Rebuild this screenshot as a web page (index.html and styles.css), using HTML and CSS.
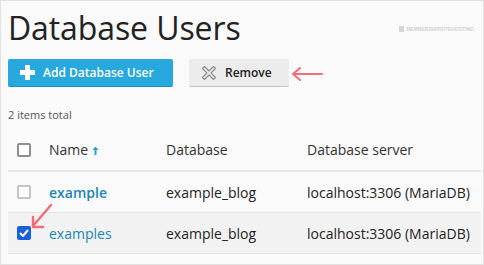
FILE: index.html
```html
<!DOCTYPE html>
<html lang="en">
<head>
  <meta charset="UTF-8" />
  <title>Database Users</title>
  <link rel="stylesheet" href="styles.css">
</head>
<body>
  <div class="frame">
    <div class="title-row">
      <h1>Database Users</h1>
      <span class="mark"><span class="mark-icon"></span>MEMBERSHIPSITEHOSTING</span>
    </div>

    <div class="toolbar">
      <button class="btn btn-primary">
        <svg width="15" height="15" viewBox="0 0 15 15"><path d="M5 0h5v5h5v5h-5v5h-5v-5h-5v-5h5z" fill="#fff"/></svg>
        Add Database User
      </button>
      <button class="btn btn-default">
        <svg width="16" height="16" viewBox="0 0 16 16"><path d="M1.5 3.5l2-2 4.5 4.5 4.5-4.5 2 2-4.5 4.5 4.5 4.5-2 2-4.5-4.5-4.5 4.5-2-2 4.5-4.5z" fill="none" stroke="#8c8c8c" stroke-width="1.1" stroke-linejoin="round"/></svg>
        Remove
      </button>
    </div>

    <div class="total">2 items total</div>

    <div class="table">
      <div class="row head">
        <div class="cell"><span class="check"></span></div>
        <div class="cell">Name <svg class="sort" width="7" height="9" viewBox="0 0 7 9"><path d="M3.5 0.5L0.5 4h2v5h2V4h2z" fill="#2a9fd0"/></svg></div>
        <div class="cell">Database</div>
        <div class="cell">Database server</div>
      </div>
      <div class="row">
        <div class="cell"><span class="check light"></span></div>
        <div class="cell"><a class="name bold">example</a></div>
        <div class="cell">example_blog</div>
        <div class="cell">localhost:3306 (MariaDB)</div>
      </div>
      <div class="row selected">
        <div class="cell"><span class="check on"><svg width="10" height="8" viewBox="0 0 10 8"><path d="M1 4l3 3 5-6" fill="none" stroke="#fff" stroke-width="2"/></svg></span></div>
        <div class="cell"><a class="name">examples</a></div>
        <div class="cell">example_blog</div>
        <div class="cell">localhost:3306 (MariaDB)</div>
      </div>
    </div>

    <svg class="arrow arrow-remove" width="32" height="14" viewBox="0 0 32 14"><path d="M31 7H3M9 1L2 7l7 6" fill="none" stroke="#f26d78" stroke-width="2" stroke-linecap="round" stroke-linejoin="round"/></svg>
    <svg class="arrow arrow-check" width="26" height="28" viewBox="0 0 26 28"><path d="M22 2L4 23M4 14v10h10" fill="none" stroke="#f26d78" stroke-width="2.4" stroke-linecap="round" stroke-linejoin="round"/></svg>
  </div>
</body>
</html>
```

FILE: styles.css
```css
body {
  margin: 0;
  font-family: "Open Sans", Arial, sans-serif;
  color: #222;
  background: #fff;
}
.frame {
  position: relative;
  width: 484px;
  height: 265px;
  box-sizing: border-box;
  border: 1px solid #e2e2e2;
  background: #fafafa;
  padding: 0 0 0 7px;
  overflow: hidden;
}
.title-row {
  display: flex;
  align-items: center;
  justify-content: space-between;
  height: 52px;
}
h1 {
  margin: 0;
  font-size: 32px;
  font-weight: 400;
  color: #222;
  letter-spacing: -0.1px;
}
.mark {
  display: flex;
  align-items: center;
  gap: 2px;
  margin-right: 9px;
  margin-top: 4px;
  font-family: Arial, sans-serif;
  font-size: 5px;
  font-weight: bold;
  color: #d2d2d2;
}
.mark-icon {
  width: 5px;
  height: 6px;
  background: #d6d6d6;
}
.toolbar {
  display: flex;
  gap: 16px;
  margin-top: 6px;
}
.btn {
  display: flex;
  align-items: center;
  gap: 8px;
  height: 28px;
  box-sizing: border-box;
  border: none;
  border-radius: 2px;
  font-family: "Open Sans", Arial, sans-serif;
  font-size: 12px;
  font-weight: 600;
  padding: 0 12px;
  white-space: nowrap;
}
.btn-primary {
  width: 165px;
  background: #28a9dd;
  color: #fff;
  border-bottom: 1px solid #1f8fbd;
}
.btn-default {
  width: 100px;
  background: #ececec;
  color: #222;
  border-bottom: 1px solid #c4c4c4;
}
.total {
  margin-top: 20px;
  font-size: 11px;
  color: #555;
}
.table {
  margin-top: 7px;
  margin-right: 2px;
  font-size: 14px;
}
.row {
  display: grid;
  grid-template-columns: 41px 117px 141px 1fr;
  align-items: center;
  height: 40px;
  border-bottom: 1px solid #e6e6e6;
}
.row.head {
  height: 41px;
  border-bottom: 2px solid #e8e8e8;
  color: #333;
}
.row.selected {
  background: #f2f2f2;
}
.cell {
  display: flex;
  align-items: center;
  gap: 4px;
  white-space: nowrap;
}
.cell:first-child {
  padding-left: 9px;
}
.sort {
  margin-top: 2px;
}
.check {
  display: flex;
  align-items: center;
  justify-content: center;
  width: 14px;
  height: 14px;
  box-sizing: border-box;
  border: 2px solid #8e8e94;
  border-radius: 2px;
  background: #fff;
}
.check.light {
  border-color: #c6c6c6;
}
.check.on {
  border: none;
  background: #1c5fdc;
}
.name {
  color: #1a86b8;
  text-decoration: none;
}
.name.bold {
  font-weight: 600;
}
.arrow {
  position: absolute;
}
.arrow-remove {
  left: 290px;
  top: 66px;
}
.arrow-check {
  left: 28px;
  top: 202px;
}
```
